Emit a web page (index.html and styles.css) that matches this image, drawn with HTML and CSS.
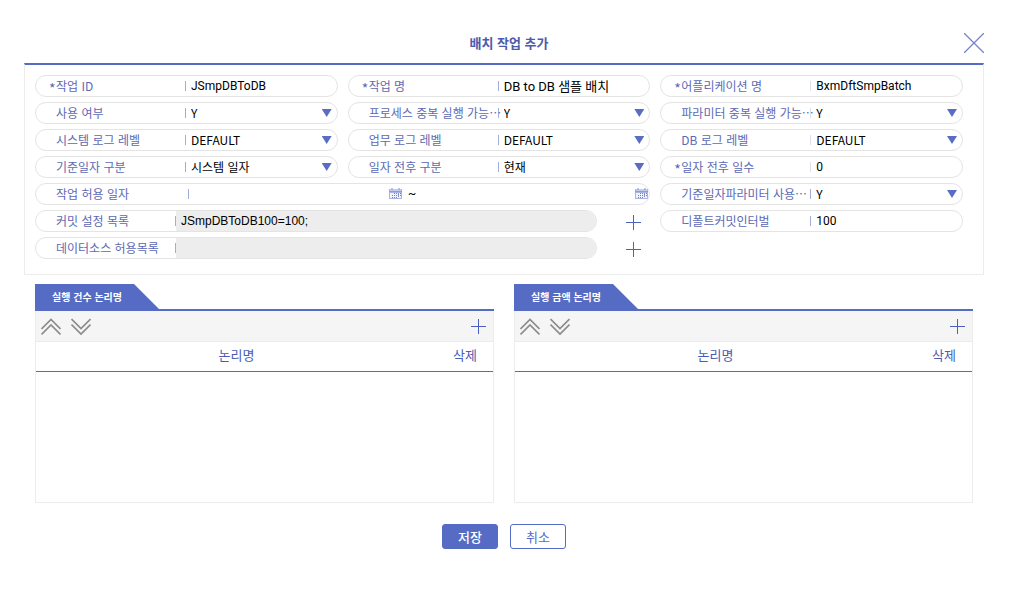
FILE: index.html
```
<!DOCTYPE html>
<html lang="ko">
<head>
  <meta charset="UTF-8" />
  <meta name="viewport" content="width=device-width, initial-scale=1" />
  <title>배치 작업 추가</title>
  <link rel="stylesheet" href="styles.css">
</head>
<body>
  <svg class="sprite" width="0" height="0" aria-hidden="true">
    <symbol id="icon-plus" viewBox="0 0 16 16">
      <path d="M0 7.5h15M7.5 0v15" fill="none" stroke="#4a61c0" />
    </symbol>
    <symbol id="icon-calendar" viewBox="0 0 14 12">
      <path d="M0 1h13v10H0z" fill="#a9b4e4" />
      <path d="M1 1h11v2H1z" fill="#c3cbf0" />
      <path d="M3 0v2M10 0v2" stroke="#8492d4" />
      <path d="M0 3.5h13" stroke="#8e9bd9" />
      <path d="M1 5h11v5H1z" fill="#f0f2fc" />
      <path d="M5 5.500h7M3 7.500h9M3 9.500h6" stroke="#6f80cd" stroke-dasharray="1 1" />
      <path d="M9.500 5v4" stroke="#7f8ed2" />
    </symbol>
    <symbol id="icon-up" viewBox="0 0 20 18">
      <path d="M0.500 11L10 1.500 19.500 11M0.500 16.500L10 7 19.500 16.500" fill="none" stroke="#8c8c8c" stroke-width="1.700" />
    </symbol>
    <symbol id="icon-down" viewBox="0 0 20 18">
      <path d="M0.500 1L10 10.500 19.500 1M0.500 6.500L10 16 19.500 6.500" fill="none" stroke="#8c8c8c" stroke-width="1.700" />
    </symbol>
  </svg>

  <div class="modal">
    <header>
      <h1>배치 작업 추가</h1>
      <button class="icon-btn close-btn" type="button" aria-label="닫기">
        <svg width="20" height="20" viewBox="0 0 20 20"><path d="M0 0l20 20M20 0L0 20" fill="none" stroke="#7584cc" stroke-width="1.300" /></svg>
      </button>
    </header>

    <form>
      <!-- Job properties -->
      <div class="fields">
        <div class="field">
          <label class="required" for="job-id">작업 ID</label>
          <input id="job-id" type="text" value="JSmpDBToDB">
        </div>
        <div class="field">
          <label class="required" for="job-name">작업 명</label>
          <input id="job-name" class="korean" type="text" value="DB to DB 샘플 배치">
        </div>
        <div class="field">
          <label class="required light" for="app-name">어플리케이션 명</label>
          <input id="app-name" type="text" value="BxmDftSmpBatch">
        </div>

        <div class="field has-select">
          <label for="use-yn">사용 여부</label>
          <select id="use-yn"><option>Y</option></select>
        </div>
        <div class="field has-select">
          <label for="process-dup">프로세스 중복 실행 가능…</label>
          <select id="process-dup"><option>Y</option></select>
        </div>
        <div class="field has-select">
          <label class="light" for="param-dup">파라미터 중복 실행 가능…</label>
          <select id="param-dup"><option>Y</option></select>
        </div>

        <div class="field has-select">
          <label for="system-log">시스템 로그 레벨</label>
          <select id="system-log"><option>DEFAULT</option></select>
        </div>
        <div class="field has-select">
          <label for="task-log">업무 로그 레벨</label>
          <select id="task-log"><option>DEFAULT</option></select>
        </div>
        <div class="field has-select">
          <label class="light" for="db-log">DB 로그 레벨</label>
          <select id="db-log"><option>DEFAULT</option></select>
        </div>

        <div class="field has-select">
          <label for="base-date">기준일자 구분</label>
          <select id="base-date"><option>시스템 일자</option></select>
        </div>
        <div class="field has-select">
          <label for="date-shift">일자 전후 구분</label>
          <select id="date-shift"><option>현재</option></select>
        </div>
        <div class="field">
          <label class="required light" for="shift-days">일자 전후 일수</label>
          <input id="shift-days" type="text" value="0">
        </div>

        <div class="field wide dates">
          <label for="date-from">작업 허용 일자</label>
          <input id="date-from" type="text">
          <button class="icon-btn" type="button" aria-label="시작일 선택"><svg width="14" height="12"><use href="#icon-calendar" /></svg></button>
          <span class="tilde">~</span>
          <input id="date-to" type="text" aria-label="종료일">
          <button class="icon-btn" type="button" aria-label="종료일 선택"><svg width="14" height="12"><use href="#icon-calendar" /></svg></button>
        </div>
        <div class="field has-select">
          <label for="base-param">기준일자파라미터 사용…</label>
          <select id="base-param"><option>Y</option></select>
        </div>

        <div class="wide list-row">
          <div class="field list">
            <label for="commit-list">커밋 설정 목록</label>
            <input id="commit-list" type="text" value="JSmpDBToDB100=100;" readonly>
          </div>
          <button class="icon-btn add-btn" type="button" aria-label="커밋 설정 추가"><svg width="16" height="16"><use href="#icon-plus" /></svg></button>
        </div>
        <div class="field">
          <label for="commit-interval">디폴트커밋인터벌</label>
          <input id="commit-interval" type="text" value="100">
        </div>

        <div class="wide list-row">
          <div class="field list">
            <label for="source-list">데이터소스 허용목록</label>
            <input id="source-list" type="text" readonly>
          </div>
          <button class="icon-btn add-btn" type="button" aria-label="데이터소스 추가"><svg width="16" height="16"><use href="#icon-plus" /></svg></button>
        </div>
      </div>

      <!-- Logical name lists -->
      <div class="panels">
        <section>
          <div class="tab-bar"><h2>실행 건수 논리명</h2></div>
          <div class="panel">
            <div class="toolbar">
              <button class="icon-btn" type="button" aria-label="위로"><svg width="20" height="18"><use href="#icon-up" /></svg></button>
              <button class="icon-btn" type="button" aria-label="아래로"><svg width="20" height="18"><use href="#icon-down" /></svg></button>
              <button class="icon-btn push" type="button" aria-label="추가"><svg width="16" height="16"><use href="#icon-plus" /></svg></button>
            </div>
            <table>
              <thead>
                <tr><th>논리명</th><th class="delete">삭제</th></tr>
              </thead>
              <tbody></tbody>
            </table>
          </div>
        </section>

        <section>
          <div class="tab-bar"><h2>실행 금액 논리명</h2></div>
          <div class="panel">
            <div class="toolbar">
              <button class="icon-btn" type="button" aria-label="위로"><svg width="20" height="18"><use href="#icon-up" /></svg></button>
              <button class="icon-btn" type="button" aria-label="아래로"><svg width="20" height="18"><use href="#icon-down" /></svg></button>
              <button class="icon-btn push" type="button" aria-label="추가"><svg width="16" height="16"><use href="#icon-plus" /></svg></button>
            </div>
            <table>
              <thead>
                <tr><th>논리명</th><th class="delete">삭제</th></tr>
              </thead>
              <tbody></tbody>
            </table>
          </div>
        </section>
      </div>

      <div class="actions">
        <button class="btn primary" type="submit">저장</button>
        <button class="btn" type="button">취소</button>
      </div>
    </form>
  </div>
</body>
</html>
```
FILE: styles.css
```
* {
  margin: 0;
  padding: 0;
  box-sizing: border-box;
}
body {
  background: #fff;
  color: #000;
  font-family: 'Noto Sans CJK KR', sans-serif;
  font-size: 12px;
}
input, select, button {
  font: inherit;
  color: inherit;
  border: none;
  outline: none;
  background: none;
}
.sprite {
  position: absolute;
}
.modal {
  padding: 24px 28px 0 24px;
}

header {
  display: grid;
  grid-template-columns: 30px 1fr 20px;
  align-items: center;
  height: 39px;
  padding-bottom: 2px;
}
header h1 {
  grid-column: 2;
  font-size: 13px;
  font-weight: 700;
  line-height: 20px;
  text-align: center;
  color: #4c5bac;
}
.icon-btn {
  display: flex;
  align-items: center;
  justify-content: center;
  flex: none;
  cursor: pointer;
}

/* Fields */
.fields {
  display: grid;
  grid-template-columns: repeat(3, 1fr);
  gap: 5px 10px;
  padding: 10px 20px 15px 10px;
  border: 1px solid #ececec;
  border-top: 2px solid #566bc4;
}
.field {
  display: flex;
  align-items: center;
  height: 22px;
  border: 1px solid #e4e4e4;
  border-radius: 11px;
  overflow: hidden;
}
.field label {
  display: flex;
  align-items: center;
  flex: none;
  width: 150px;
  padding-left: 13px;
  line-height: 20px;
  color: #5c69b5;
  white-space: nowrap;
  background: linear-gradient(#a3addb, #a3addb) right center / 1px 10px no-repeat;
}
.field label.light {
  background-image: linear-gradient(#dcdff0, #dcdff0);
}
.field label::before {
  content: "";
  flex: none;
  width: 7px;
}
.field label.required::before {
  content: "*";
  height: 16px;
  font-size: 14px;
}
.field input,
.field select {
  flex: 1;
  min-width: 0;
  height: 20px;
  padding-left: 5px;
}
.field input {
  font-family: Roboto, 'Noto Sans CJK KR', sans-serif;
}
.field input.korean {
  padding-bottom: 2px;
  font-size: 13px;
}
.field select {
  appearance: none;
  padding-bottom: 2px;
}
.has-select::after {
  content: "";
  width: 10px;
  height: 8px;
  margin-right: 5px;
  background: #5a6dc4;
  clip-path: polygon(0 0, 100% 0, 50% 100%);
}
.wide {
  grid-column: span 2;
}
.dates label {
  width: 153px;
}
.tilde {
  width: 19px;
  margin-right: 14px;
  font-family: Roboto, sans-serif;
  text-align: center;
}
.list-row {
  display: flex;
}
.list {
  flex: 1;
}
.list label {
  width: 140px;
}
.list input {
  background: #ededed;
  font-family: 'Liberation Sans', sans-serif;
}
.add-btn {
  width: 33px;
  margin-left: 20px;
  padding-top: 4px;
}

/* Panels */
.panels {
  display: grid;
  grid-template-columns: 1fr 1fr;
  gap: 20px;
  padding: 9px 11px 0;
}
.tab-bar {
  border-bottom: 2px solid #566bc4;
}
.tab-bar h2 {
  width: 124px;
  padding-left: 17px;
  background: #566bc4;
  clip-path: polygon(0 0, 99px 0, 100% 100%, 0 100%);
  color: #fff;
  font-size: 10px;
  font-weight: 700;
  line-height: 25px;
}
.panel {
  min-height: 192px;
  border: 1px solid #ececec;
  border-top: none;
}
.toolbar {
  display: flex;
  align-items: center;
  gap: 10px;
  height: 31px;
  padding: 2px 6px 0 5px;
  background: #f5f5f5;
  border-bottom: 1px solid #ececec;
}
.push {
  margin-left: auto;
}
table {
  width: 100%;
  border-collapse: collapse;
}
th {
  height: 29px;
  padding-bottom: 3px;
  border-bottom: 1px solid #566bc4;
  color: #4a5cb4;
  font-size: 13px;
  font-weight: 400;
  line-height: 18px;
}
th.delete {
  width: 56px;
}

.actions {
  display: flex;
  justify-content: center;
  gap: 12px;
  padding: 21px 0;
}
.btn {
  width: 56px;
  height: 25px;
  border: 1px solid #566bc4;
  border-radius: 3px;
  color: #566bc4;
  font-size: 13px;
  line-height: 18px;
  cursor: pointer;
}
.btn.primary {
  background: #566bc4;
  color: #fff;
  font-weight: 500;
}
```
